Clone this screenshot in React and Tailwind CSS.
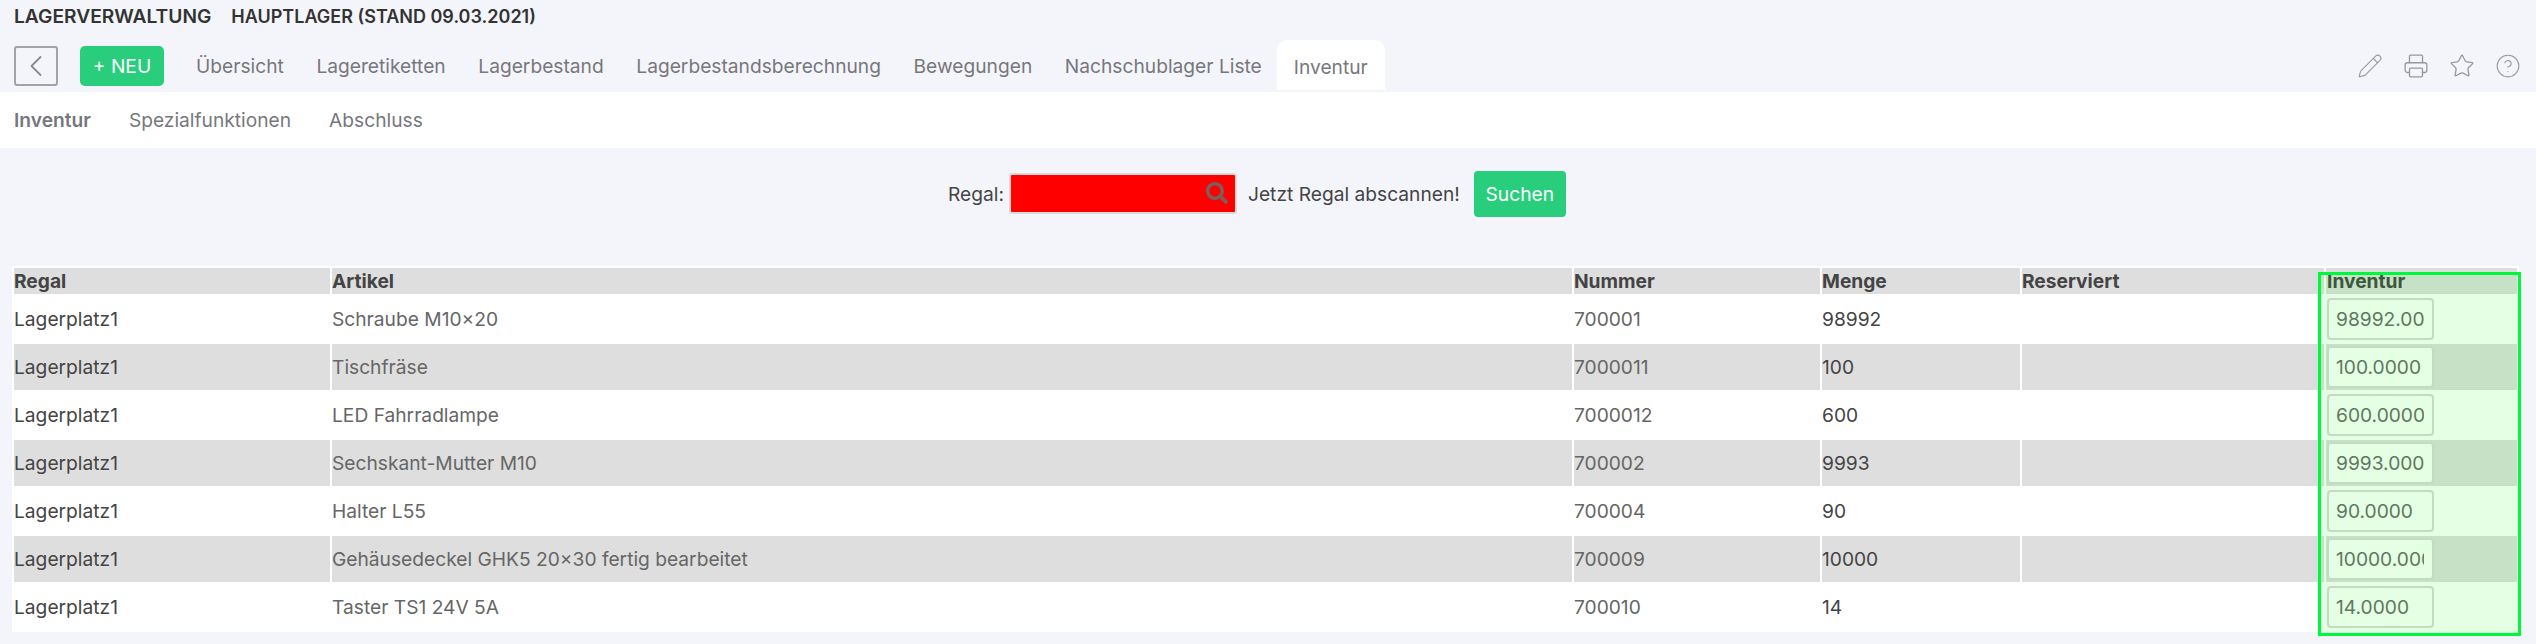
import React from 'react';
import { ChevronLeft, Pencil, Printer, Star, CircleHelp } from 'lucide-react';
import { FaSearch } from 'react-icons/fa';

const tabs = ['Übersicht', 'Lageretiketten', 'Lagerbestand', 'Lagerbestandsberechnung', 'Bewegungen', 'Nachschublager Liste'];

const rows = [
  ['Schraube M10×20', '700001', '98992', '98992.0000'],
  ['Tischfräse', '7000011', '100', '100.0000'],
  ['LED Fahrradlampe', '7000012', '600', '600.0000'],
  ['Sechskant-Mutter M10', '700002', '9993', '9993.0000'],
  ['Halter L55', '700004', '90', '90.0000'],
  ['Gehäusedeckel GHK5 20×30 fertig bearbeitet', '700009', '10000', '10000.0000'],
  ['Taster TS1 24V 5A', '700010', '14', '14.0000'],
];

const App = () => {
  return (
    <div className="h-[644px] w-[2536px] overflow-hidden bg-[#f4f5fa] font-['Inter',sans-serif] text-[#444]">
      <div className="flex h-[32px] items-center gap-[20px] pl-[14px] font-semibold text-[#333]">
        <span className="text-[19.2px]">LAGERVERWALTUNG</span>
        <span className="text-[18px]">HAUPTLAGER (STAND 09.03.2021)</span>
      </div>

      <div className="flex h-[60px] items-start pl-[14px] pr-[15px] pt-[8px]">
        <button className="mt-[6px] flex h-[40px] w-[44px] items-center justify-center rounded-[3px] border-2 border-[#a3a3a6] text-[#8a8a8e]">
          <ChevronLeft size={36} strokeWidth={1.2} />
        </button>
        <button className="ml-[22px] mt-[6px] h-[40px] w-[84px] rounded-[5px] bg-[#28ce7c] text-[19.2px] text-white">+ NEU</button>
        <div className="ml-[32px] mt-[6px] flex h-[40px] items-center gap-[32.6px] text-[19.2px] text-[#77777d]">
          {tabs.map((t) => (
            <span key={t}>{t}</span>
          ))}
        </div>
        <div className="ml-[15px] flex h-[50px] items-center rounded-t-[10px] bg-white px-[17px] pt-[4px] text-[19.2px] text-[#77777d]">Inventur</div>
        <div className="ml-auto mt-[13px] flex items-center gap-[20px] text-[#98989c]">
          <Pencil size={26} strokeWidth={1} />
          <Printer size={26} strokeWidth={1.2} />
          <Star size={26} strokeWidth={1.2} />
          <CircleHelp size={26} strokeWidth={1} />
        </div>
      </div>

      <div className="flex h-[56px] items-center gap-[38px] bg-white pl-[14px] text-[19.2px] text-[#77777d]">
        <span className="font-semibold">Inventur</span>
        <span>Spezialfunktionen</span>
        <span>Abschluss</span>
      </div>

      <div className="ml-[948px] mt-[23px] flex h-[46px] items-center text-[19.2px] text-[#444]">
        <span>Regal:</span>
        <div className="relative ml-[5px] h-[41px] w-[228px] -translate-y-[1px] rounded-[3px] border-2 border-[#d9d9d9] bg-[#ff0000]">
          <FaSearch className="absolute right-[7px] top-[7px] text-[#7b5f5f]" size={22} />
        </div>
        <span className="ml-[11px]">Jetzt Regal abscannen!</span>
        <button className="ml-[14px] h-[46px] w-[92px] rounded-[4px] bg-[#28ce7c] text-[19.2px] text-white">Suchen</button>
      </div>

      <div className="relative ml-[12px] mt-[49px] w-[2507px] bg-white pt-[2px]">
        <table className="w-full table-fixed border-separate border-spacing-x-[2px] border-spacing-y-0 text-[19.2px] leading-[24px]">
          <colgroup>
            <col className="w-[316px]" />
            <col className="w-[1240px]" />
            <col className="w-[246px]" />
            <col className="w-[198px]" />
            <col className="w-[302px]" />
            <col />
          </colgroup>
          <thead>
            <tr className="h-[26px] bg-[#dedede] text-left font-bold text-[#444]">
              <th className="p-0">Regal</th>
              <th className="p-0">Artikel</th>
              <th className="p-0">Nummer</th>
              <th className="p-0">Menge</th>
              <th className="p-0">Reserviert</th>
              <th className="p-0 pl-[1px]">Inventur</th>
            </tr>
          </thead>
          <tbody>
            {rows.map((r, i) => (
              <tr key={r[1]} className={i % 2 === 0 ? 'h-[50px] bg-white' : 'h-[46px] bg-[#dedede]'}>
                <td className="p-0 text-[#444]">Lagerplatz1</td>
                <td className="p-0 text-[#666]">{r[0]}</td>
                <td className="p-0 text-[#666]">{r[1]}</td>
                <td className="p-0 text-[#444]">{r[2]}</td>
                <td className="p-0"></td>
                <td className="p-0 pl-[1px]">
                  <input
                    readOnly
                    value={r[3]}
                    className="block h-[42px] w-[107px] rounded-[4px] border-2 border-[#d9d9d9] bg-white pl-[7px] pr-[8px] text-[19.2px] text-[#6a6a6a] outline-none"
                  />
                </td>
              </tr>
            ))}
          </tbody>
        </table>
        <div className="pointer-events-none absolute left-[2306px] top-[6px] h-[364px] w-[203px] border-[3px] border-[#00f83c] bg-[#00ff001a]"></div>
      </div>
    </div>
  );
};

export default App;
